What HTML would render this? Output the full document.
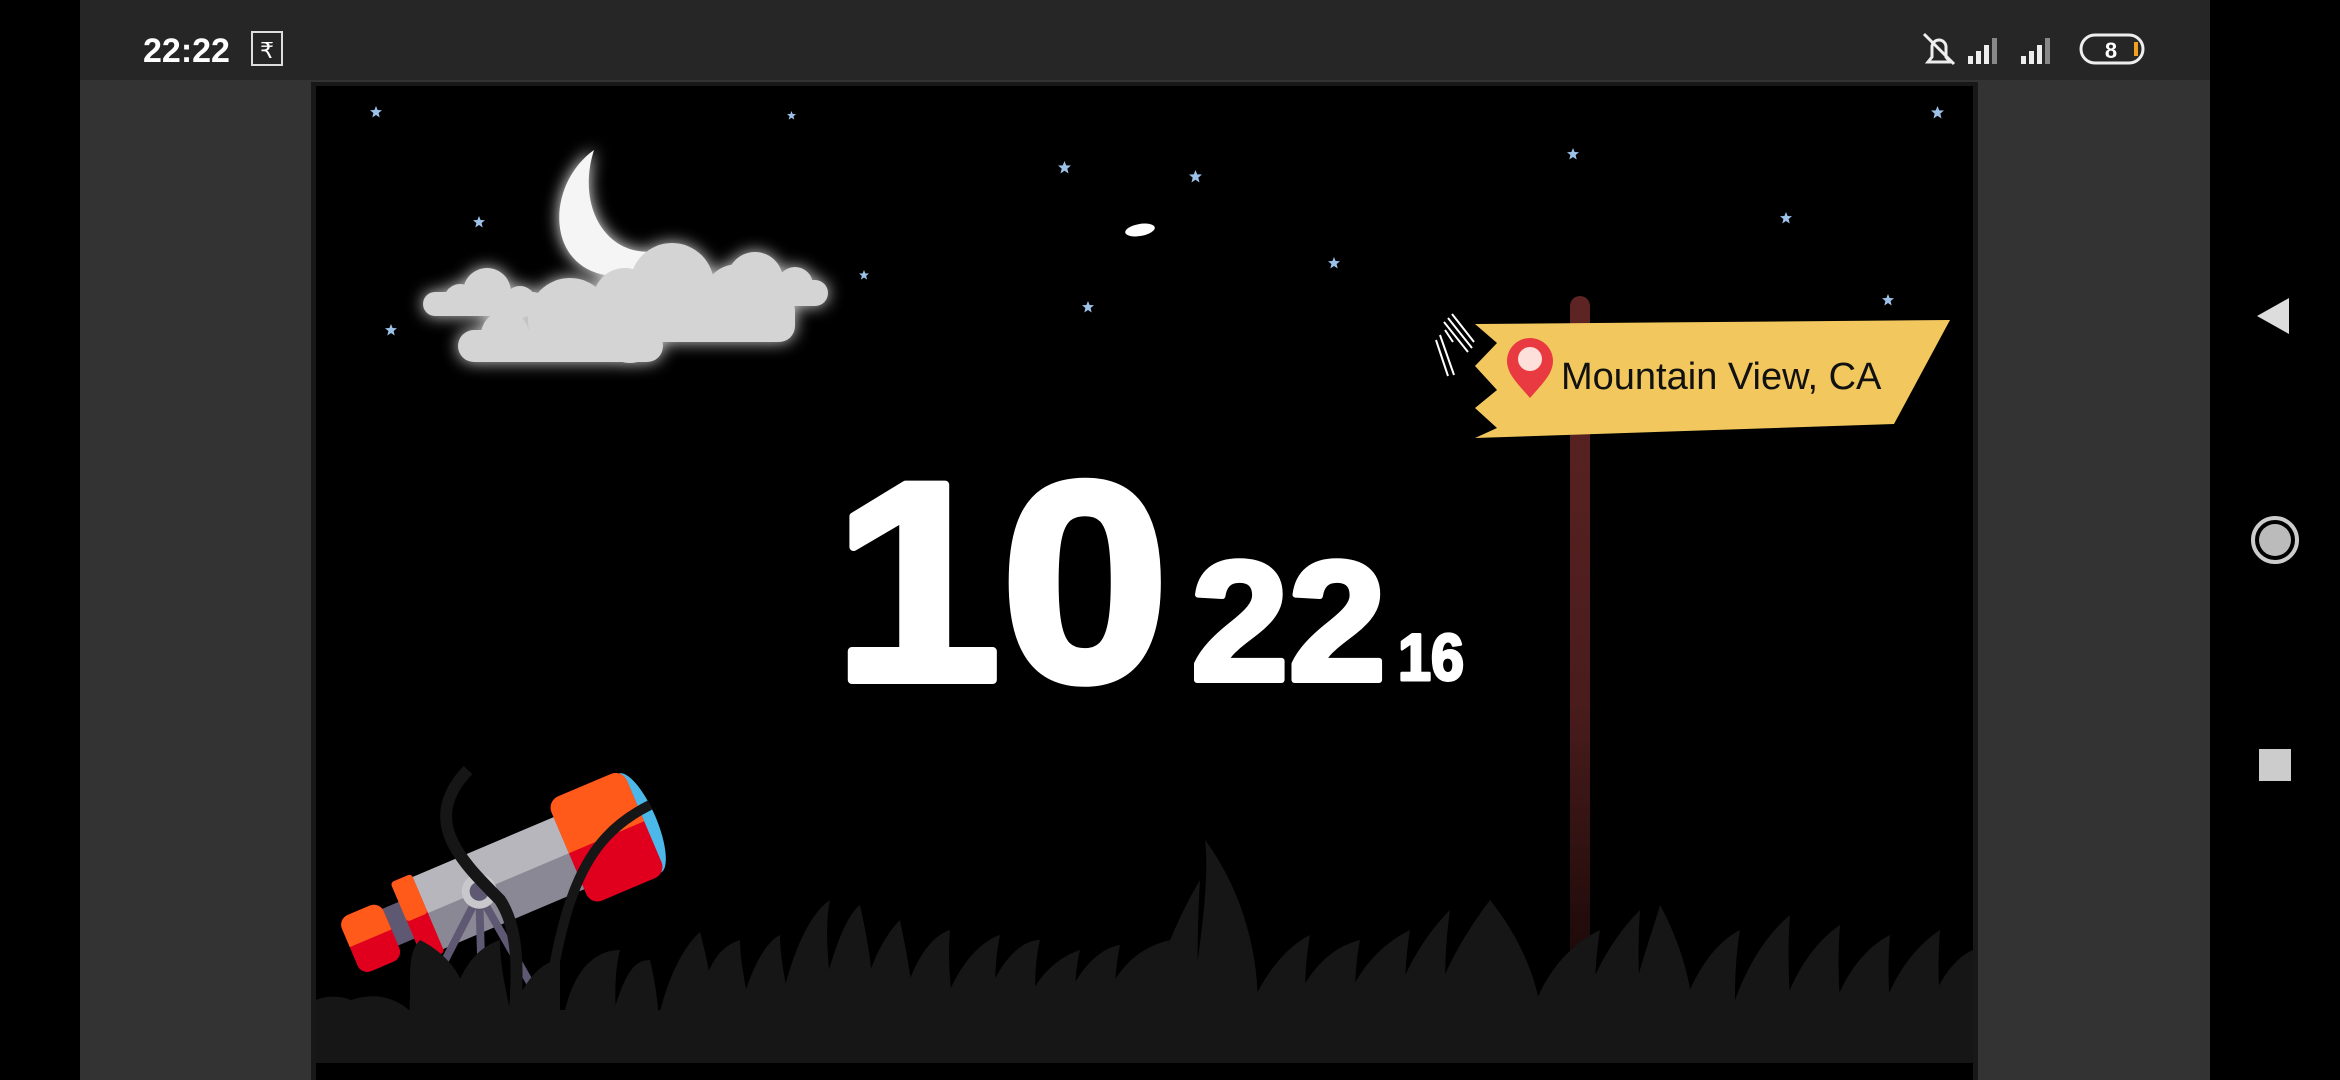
<!DOCTYPE html>
<html><head><meta charset="utf-8"><style>
html,body{margin:0;padding:0;width:2340px;height:1080px;overflow:hidden;background:#000;font-family:"Liberation Sans",sans-serif}
</style></head><body>
<svg width="2340" height="1080" viewBox="0 0 2340 1080" xmlns="http://www.w3.org/2000/svg" style="position:absolute;left:0;top:0">
<defs>
<filter id="glow" x="-30%" y="-30%" width="160%" height="160%"><feGaussianBlur stdDeviation="8" result="b"/><feMerge><feMergeNode in="b"/><feMergeNode in="SourceGraphic"/></feMerge></filter>
<linearGradient id="pole" x1="0" y1="0" x2="0" y2="1"><stop offset="0" stop-color="#5e2424"/><stop offset="0.6" stop-color="#4a1c1c"/><stop offset="1" stop-color="#1a0808"/></linearGradient>
<symbol id="st" viewBox="-6 -6 12 12"><polygon points="0,-6 1.6,-2 6,-1.8 2.6,1 3.7,5.5 0,3 -3.7,5.5 -2.6,1 -6,-1.8 -1.6,-2" fill="#9dc2ea"/></symbol>
</defs>
<rect x="0" y="0" width="2340" height="1080" fill="#000"/>
<rect x="80" y="0" width="2130" height="1080" fill="#333"/>
<rect x="80" y="0" width="2130" height="80" fill="#262626"/>
<rect x="311" y="82" width="1667" height="998" fill="#181818"/>
<rect x="316" y="86" width="1657" height="994" fill="#000"/>
<!-- status bar -->
<text x="143" y="62" fill="#fff" font-size="34" font-weight="bold" font-family="Liberation Sans">22:22</text>
<rect x="252" y="32" width="30" height="33" fill="none" stroke="#ddd" stroke-width="2"/>
<text x="267" y="58" fill="#fff" font-size="22" text-anchor="middle">₹</text>
<g fill="none" stroke="#eee" stroke-width="3">
<path d="M1928 62 h22 l-4-5 v-10 a7 7 0 0 0 -14 0 v10 z"/><path d="M1924 34 l30 30"/>
</g>
<g fill="#eee"><rect x="1968" y="56" width="5" height="8"/><rect x="1976" y="51" width="5" height="13"/><rect x="1984" y="45" width="5" height="19"/><rect x="1992" y="38" width="5" height="26" fill="#888"/></g>
<g fill="#eee"><rect x="2021" y="56" width="5" height="8"/><rect x="2029" y="51" width="5" height="13"/><rect x="2037" y="45" width="5" height="19"/><rect x="2045" y="38" width="5" height="26" fill="#888"/></g>
<rect x="2081" y="35" width="62" height="28" rx="14" fill="none" stroke="#eee" stroke-width="3"/>
<rect x="2134" y="42" width="4" height="14" fill="#f0a020"/>
<text x="2111" y="58" fill="#fff" font-size="22" text-anchor="middle" font-weight="bold">8</text>
<!-- nav -->
<polygon points="2289,298 2289,334 2257,316" fill="#ddd"/>
<circle cx="2275" cy="540" r="22" fill="none" stroke="#ccc" stroke-width="4"/><circle cx="2275" cy="540" r="16" fill="#bbb"/>
<rect x="2259" y="749" width="32" height="32" fill="#ccc"/>
<!-- stars -->
<g>
<use href="#st" x="370" y="106" width="12" height="12"/><use href="#st" x="787" y="111" width="9" height="9"/>
<use href="#st" x="1931" y="106" width="13" height="13"/><use href="#st" x="1058" y="161" width="13" height="13"/>
<use href="#st" x="1189" y="170" width="13" height="13"/><use href="#st" x="1567" y="148" width="12" height="12"/>
<use href="#st" x="1780" y="212" width="12" height="12"/><use href="#st" x="473" y="216" width="12" height="12"/>
<use href="#st" x="859" y="270" width="10" height="10"/><use href="#st" x="1328" y="257" width="12" height="12"/>
<use href="#st" x="1082" y="301" width="12" height="12"/><use href="#st" x="385" y="324" width="12" height="12"/>
<use href="#st" x="1882" y="294" width="12" height="12"/>
</g>
<ellipse cx="1140" cy="230" rx="15" ry="6" fill="#fff" transform="rotate(-10 1140 230)"/>
<!-- moon and clouds -->
<g filter="url(#glow)">
<path d="M594 150 C545 185 545 270 612 276 C640 276 655 262 662 250 C610 262 575 210 594 150 Z" fill="#f5f5f5"/>
<g fill="#d4d4d4">
<rect x="423" y="292" width="122" height="24" rx="12"/><circle cx="487" cy="292" r="24"/><circle cx="460" cy="300" r="16"/><circle cx="520" cy="302" r="16"/>
<rect x="690" y="280" width="138" height="26" rx="13"/><circle cx="755" cy="280" r="28"/><circle cx="795" cy="285" r="18"/>
<rect x="570" y="295" width="225" height="47" rx="16"/><circle cx="672" cy="285" r="42"/><circle cx="625" cy="300" r="32"/><circle cx="738" cy="300" r="36"/>
<rect x="458" y="330" width="205" height="32" rx="16"/><circle cx="570" cy="320" r="42"/><circle cx="630" cy="335" r="28"/><circle cx="505" cy="335" r="24"/>
</g></g>
<!-- pole & sign -->
<rect x="1570" y="296" width="20" height="680" rx="10" fill="url(#pole)"/>
<polygon points="1475,324 1950,320 1894,424 1475,438 1497,428 1475,408 1497,390 1475,366 1497,343" fill="#f2c85e"/>
<path d="M1530 398 C1518 384 1507 374 1507 361 a23 23 0 0 1 46 0 C1553 374 1542 384 1530 398 Z" fill="#e83a40"/>
<circle cx="1530" cy="359" r="12" fill="#fde0da"/>
<text x="1561" y="389" font-size="38" fill="#111" font-family="Liberation Sans">Mountain View, CA</text>
<g stroke="#fff" stroke-width="2" fill="none"><path d="M1448 318 l24 30 M1444 322 l24 30 M1452 314 l22 28 M1440 335 l14 40 M1436 340 l12 36 M1445 330 l8 12"/></g>
<!-- telescope -->
<g transform="translate(340 920) scale(0.87) translate(-340 -920)">
<g transform="rotate(-23 500 887)">
<rect x="376" y="862" width="40" height="46" fill="#5e5872"/>
<rect x="338" y="853" width="52" height="70" rx="12" fill="#e0001e"/><path d="M350 853 h28 a12 12 0 0 1 12 12 v23 h-52 v-23 a12 12 0 0 1 12-12z" fill="#ff5a1a"/>
<rect x="410" y="842" width="210" height="90" fill="#8b8896"/><rect x="410" y="842" width="210" height="45" fill="#b6b6bc"/>
<rect x="410" y="838" width="26" height="98" rx="4" fill="#e0001e"/><rect x="410" y="838" width="26" height="49" rx="4" fill="#ff5a1a"/>
<ellipse cx="700" cy="887" rx="20" ry="62" fill="#4cb8ea"/>
<rect x="612" y="822" width="94" height="130" rx="14" fill="#e0001e"/><path d="M626 822 h66 a14 14 0 0 1 14 14 v51 h-94 v-51 a14 14 0 0 1 14-14z" fill="#ff5a1a"/>
</g>
<g stroke="#5e5872" stroke-width="9"><line x1="500" y1="890" x2="410" y2="1065"/><line x1="500" y1="890" x2="505" y2="1065"/><line x1="500" y1="890" x2="600" y2="1065"/></g>
<circle cx="500" cy="887" r="20" fill="#c8c8cc"/><circle cx="500" cy="887" r="11" fill="#5e5872"/>
</g>
<path d="M468 770 C420 820 460 860 500 900 C520 930 520 980 510 1060" stroke="#161616" stroke-width="12" fill="none"/>
<path d="M650 805 C580 840 560 900 540 1060" stroke="#161616" stroke-width="10" fill="none"/>
<!-- grass -->
<g fill="#161616">
<path d="M316 1000 C340 990 380 1000 400 1063 L316 1063Z"/>
<path d="M330 1010 C380 980 420 1000 440 1063 L360 1063Z"/>
<path d="M400 1063 C420 1000 400 960 420 940 C460 960 480 1000 470 1063Z"/>
<path d="M440 1063 C450 980 470 950 500 940 C500 990 520 1020 510 1063Z"/>
<path d="M500 1063 C510 990 540 960 560 960 C560 1010 560 1040 560 1063Z"/>
<path d="M560 1063 C560 980 590 950 620 950 C610 990 620 1030 615 1063Z"/>
<path d="M600 1063 C620 980 630 960 650 960 C660 1000 660 1040 660 1063Z"/>
<path d="M650 1063 C660 990 680 950 700 932 C710 970 720 1020 710 1063Z"/>
<path d="M690 1063 C700 980 710 950 740 940 C740 980 760 1030 750 1063Z"/>
<path d="M730 1063 C740 990 760 945 780 935 C780 980 800 1020 790 1063Z"/>
<path d="M770 1063 C780 990 800 920 830 900 C820 950 840 1010 830 1063Z"/>
<path d="M810 1063 C820 990 840 920 860 905 C870 950 880 1010 870 1063Z"/>
<path d="M850 1063 C860 980 880 940 900 920 C910 970 920 1020 910 1063Z"/>
<path d="M890 1063 C900 990 920 940 950 930 C945 980 960 1020 950 1063Z"/>
<path d="M930 1063 C940 990 970 945 1000 935 C990 980 1000 1030 990 1063Z"/>
<path d="M970 1063 C980 990 1010 940 1040 940 C1030 980 1040 1030 1030 1063Z"/>
<path d="M1010 1063 C1020 990 1050 960 1080 950 C1070 990 1080 1030 1070 1063Z"/>
<path d="M1050 1063 C1060 990 1090 950 1120 945 C1110 990 1120 1030 1110 1063Z"/>
<path d="M1090 1063 C1100 980 1130 950 1170 940 C1150 990 1160 1030 1150 1063Z"/>
<path d="M1130 1063 C1150 990 1170 930 1200 880 C1195 960 1200 1020 1195 1063Z"/>
<path d="M1180 1063 C1200 960 1210 880 1205 840 C1250 900 1270 990 1250 1063Z"/>
<path d="M1230 1063 C1250 990 1280 950 1310 935 C1300 990 1310 1030 1300 1063Z"/>
<path d="M1280 1063 C1290 990 1320 950 1360 940 C1350 990 1360 1030 1350 1063Z"/>
<path d="M1330 1063 C1340 990 1370 950 1410 930 C1400 990 1410 1030 1400 1063Z"/>
<path d="M1380 1063 C1390 990 1420 940 1450 910 C1440 980 1450 1030 1440 1063Z"/>
<path d="M1420 1063 C1430 990 1460 940 1490 900 C1490 970 1500 1030 1490 1063Z"/>
<path d="M1470 1063 C1480 990 1490 940 1490 900 C1530 950 1550 1010 1540 1063Z"/>
<path d="M1520 1063 C1530 990 1560 950 1600 930 C1590 990 1600 1030 1590 1063Z"/>
<path d="M1570 1063 C1580 990 1610 940 1640 910 C1635 980 1645 1030 1640 1063Z"/>
<path d="M1620 1063 C1630 990 1650 940 1660 905 C1690 960 1700 1020 1690 1063Z"/>
<path d="M1670 1063 C1680 990 1710 945 1740 930 C1730 990 1740 1030 1730 1063Z"/>
<path d="M1720 1063 C1730 990 1760 940 1790 915 C1785 980 1795 1030 1790 1063Z"/>
<path d="M1770 1063 C1780 990 1810 945 1840 925 C1835 985 1845 1030 1840 1063Z"/>
<path d="M1820 1063 C1830 990 1860 950 1890 935 C1885 990 1895 1030 1890 1063Z"/>
<path d="M1870 1063 C1880 990 1910 950 1940 930 C1935 990 1945 1030 1940 1063Z"/>
<path d="M1910 1063 C1930 990 1950 960 1973 950 L1973 1063Z"/>
<rect x="316" y="1010" width="1657" height="53"/>
</g>
<rect x="316" y="1063" width="1657" height="17" fill="#000"/>
<!-- clock -->
<g fill="#fff" stroke="#fff" stroke-linejoin="round" font-family="Liberation Sans" font-weight="bold">
<text x="833" y="680" font-size="284" stroke-width="8" textLength="336" lengthAdjust="spacingAndGlyphs">10</text>
<text x="1191" y="680" font-size="170" stroke-width="6" textLength="195" lengthAdjust="spacingAndGlyphs">22</text>
<text x="1398" y="680" font-size="66" stroke-width="3" textLength="66" lengthAdjust="spacingAndGlyphs">16</text>
</g>
</svg>
</body></html>
